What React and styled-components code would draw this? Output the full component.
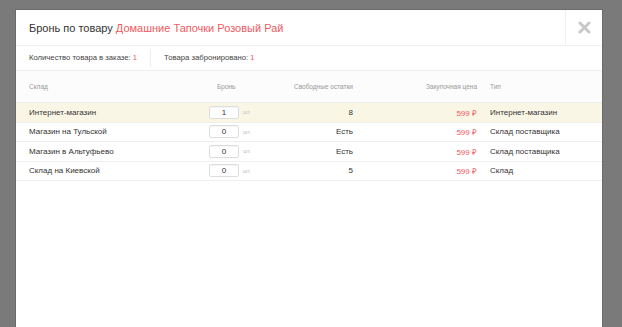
import React from "react";
import styled, { createGlobalStyle } from "styled-components";

const Global = createGlobalStyle`
  html, body { margin: 0; padding: 0; }
  body {
    background: #7a7a7a;
    font-family: "Liberation Sans", Arial, sans-serif;
    overflow: hidden;
  }
`;

const Overlay = styled.div`
  height: 327px;
  padding: 10px 0 0 16px;
  box-sizing: border-box;
  overflow: hidden;
`;

const Modal = styled.div`
  width: 586px;
  height: 340px;
  background: #fff;
  box-shadow: 0 0 0 1px rgba(0, 0, 0, 0.12);
  display: flex;
  flex-direction: column;
`;

const Header = styled.div`
  display: flex;
  height: 36px;
  border-bottom: 1px solid #f0f0f0;
  box-sizing: border-box;
`;

const Title = styled.div`
  flex: 1;
  display: flex;
  align-items: center;
  padding-left: 13px;
  font-size: 11px;
  color: #333;
`;

const Accent = styled.span`
  color: ${(p) => p.$c || "#ef5a62"};
  margin-left: ${(p) => p.$gap || 0}px;
`;

const Close = styled.div`
  width: 36px;
  border-left: 1px solid #f0f0f0;
  display: flex;
  align-items: center;
  justify-content: center;
`;

const Info = styled.div`
  display: flex;
  align-items: center;
  height: 25px;
  border-bottom: 1px solid #efefef;
  box-sizing: border-box;
  padding-left: 13px;
  font-size: 7.7px;
  color: #444;
`;

const InfoItem = styled.div`
  padding: ${(p) => (p.$first ? "0 13px 0 0" : "0 0 0 13px")};
  line-height: 18px;
  border-right: ${(p) => (p.$first ? "1px solid #eee" : "none")};
`;

const Grid = styled.div`
  display: grid;
  grid-template-columns: 180px 60px 84px 124px 1fr;
  align-items: center;
  box-sizing: border-box;
  padding-left: 13px;
  height: ${(p) => p.$h}px;
  background: ${(p) => p.$bg || "#fff"};
  border-bottom: 1px solid #efefef;
  font-size: ${(p) => (p.$head ? 6.5 : 8)}px;
  color: ${(p) => (p.$head ? "#999" : "#333")};
`;

const Cell = styled.div`
  padding-left: ${(p) => p.$pl || 0}px;
  display: flex;
  align-items: center;
  justify-content: ${(p) => (p.$align === "right" ? "flex-end" : "flex-start")};
  white-space: nowrap;
  color: ${(p) => p.$c || "inherit"};
`;

const Qty = styled.div`
  width: 28px;
  height: 11px;
  border: 1px solid #ddd;
  border-radius: 2px;
  background: #fff;
  font-size: 8px;
  color: #333;
  display: flex;
  align-items: center;
  justify-content: center;
  box-shadow: inset 0 1px 1px rgba(0, 0, 0, 0.04);
`;

const Unit = styled.span`
  font-size: 5.5px;
  color: #bbb;
  margin-left: 4px;
`;

const Body = styled.div`
  flex: 1;
`;

const Footer = styled.div`
  height: 19px;
  border-top: 1px solid #f0f0f0;
  background: #fcfcfc;
`;

const rows = [
  { name: "Интернет-магазин", q: 1, free: "8", type: "Интернет-магазин", hl: true },
  { name: "Магазин на Тульской", q: 0, free: "Есть", type: "Склад поставщика" },
  { name: "Магазин в Альтуфьево", q: 0, free: "Есть", type: "Склад поставщика" },
  { name: "Склад на Киевской", q: 0, free: "5", type: "Склад" },
];

export default function App() {
  return (
    <>
      <Global />
      <Overlay>
        <Modal>
          <Header>
            <Title>
              Бронь по товару<Accent $gap={3}>Домашние Тапочки Розовый Рай</Accent>
            </Title>
            <Close>
              <svg width="13" height="13" viewBox="0 0 13 13">
                <path d="M2 2 L11 11 M11 2 L2 11" stroke="#c8c8c8" strokeWidth="3" strokeLinecap="round" />
              </svg>
            </Close>
          </Header>
          <Info>
            <InfoItem $first>
              Количество товара в заказе: <Accent>1</Accent>
            </InfoItem>
            <InfoItem>
              Товара забронировано: <Accent>1</Accent>
            </InfoItem>
          </Info>
          <Grid $head $h={32} $bg="#fcfcfc">
            <Cell>Склад</Cell>
            <Cell $pl={8}>Бронь</Cell>
            <Cell $align="right">Свободные остатки</Cell>
            <Cell $align="right">Закупочная цена</Cell>
            <Cell $pl={13}>Тип</Cell>
          </Grid>
          {rows.map((r) => (
            <Grid key={r.name} $h={19.5} $bg={r.hl ? "#faf6e6" : "#fff"}>
              <Cell>{r.name}</Cell>
              <Cell>
                <Qty>{r.q}</Qty>
                <Unit>шт.</Unit>
              </Cell>
              <Cell $align="right">{r.free}</Cell>
              <Cell $align="right" $c="#ef5a62">599 ₽</Cell>
              <Cell $pl={13}>{r.type}</Cell>
            </Grid>
          ))}
          <Body />
          <Footer />
        </Modal>
      </Overlay>
    </>
  );
}
